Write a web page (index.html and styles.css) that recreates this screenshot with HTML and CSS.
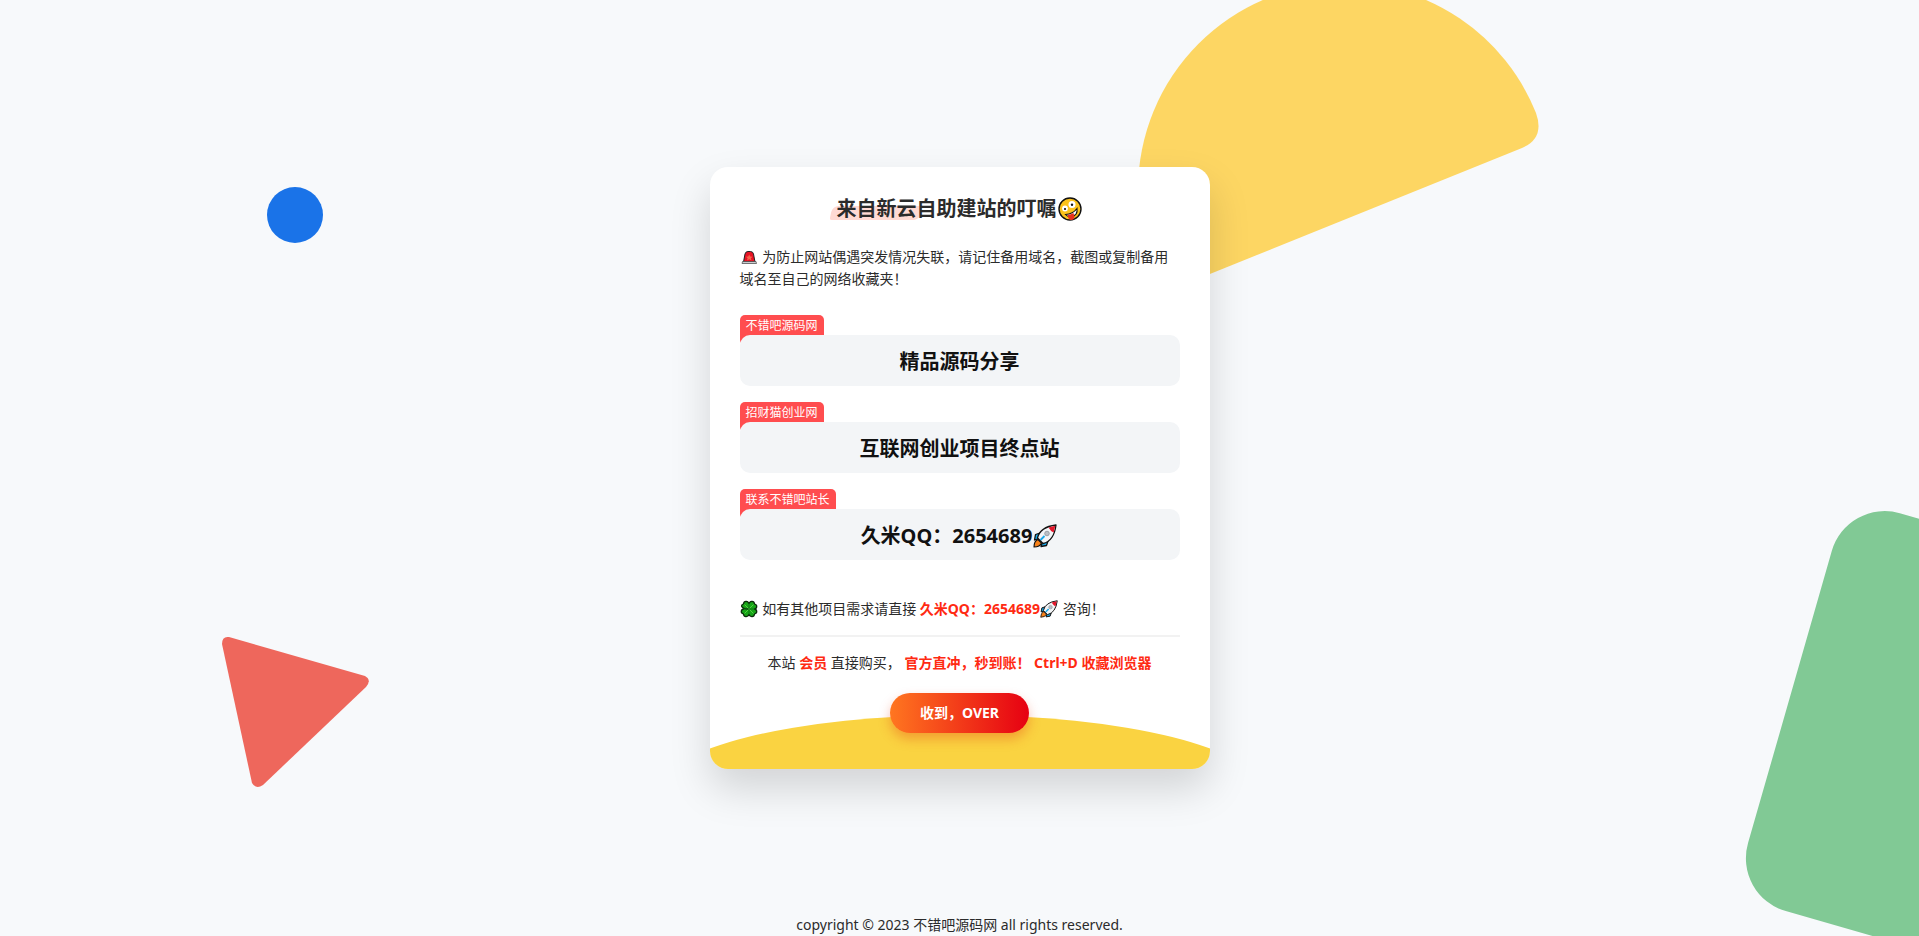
FILE: index.html
```html
<!DOCTYPE html>
<html lang="zh-CN">
<head>
<meta charset="utf-8">
<meta name="viewport" content="width=device-width, initial-scale=1">
<title>来自新云自助建站的叮嘱</title>
<link rel="stylesheet" href="styles.css">
</head>
<body class="page">
<svg class="backdrop" viewBox="0 0 1919 936" preserveAspectRatio="xMidYMid slice" aria-hidden="true">
  <circle cx="295" cy="215" r="28" fill="#1a73e8"/>
  <path d="M1138 190A207 207 0 0 1 1344 -17A207 207 0 0 1 1536 113Q1545 138 1522 148L1200 278Q1140 280 1138 190Z" fill="#fdd663"/>
  <path d="M229 637L365 676Q372 680 366 687L263 785Q256 790 252 783L222 644Q222 636 229 637Z" fill="#ee675c"/>
  <rect x="0" y="0" width="420" height="414" rx="55" transform="translate(1847 498) rotate(16)" fill="#81c995"/>
</svg>
<svg width="0" height="0" class="sprite" aria-hidden="true">
  <symbol id="rocket" viewBox="0 0 24 24">
    <path d="M7 9L2.500 10.500L1.500 16L6 14.500ZM15 17L13.500 21.500L8 22.500L9.500 18Z" fill="#18a8e8" stroke="#111" stroke-width="1.300" stroke-linejoin="round"/>
    <path d="M5 15.500Q1 17 1 23Q7 23 8.500 19Z" fill="#f7821b" stroke="#111" stroke-width="1.100" stroke-linejoin="round"/>
    <path d="M4.500 14Q7 3 23 1Q21 17 10 19.500Z" fill="#f2f4f6" stroke="#111" stroke-width="1.300" stroke-linejoin="round"/>
    <path d="M15.500 3.400L22.300 1.700L20.600 8.500Q17.500 7 15.500 3.400Z" fill="#e3172b"/>
    <circle cx="14" cy="9.500" r="2.300" fill="#b9bfc5" stroke="#8c9399" stroke-width=".8"/>
    <path d="M7.500 16L11.500 12" stroke="#18a8e8" stroke-width="1.800"/>
  </symbol>
</svg>
<main class="stage">
  <section class="card">
    <h1 class="title"><span class="mark">来自新云</span>自助建站的叮嘱<svg class="emoji-lg" viewBox="0 0 24 24" role="img" aria-label="鬼脸"><circle cx="12" cy="12" r="11" fill="#fcc21b" stroke="#111" stroke-width="1.400"/><circle cx="7" cy="11.500" r="2.900" fill="#fff"/><circle cx="14" cy="7.500" r="3.500" fill="#fff"/><circle cx="7" cy="12" r="1.100" fill="#111"/><circle cx="14" cy="7.700" r="1.200" fill="#111"/><path d="M7.500 17.500Q15 17 19 11.500Q20 18.500 13.500 19.500Q9.500 20 7.500 17.500Z" fill="#fff" stroke="#111" stroke-width="1.100"/><path d="M9.500 18Q13 17.500 15.500 16L16.500 20Q16 23.500 12.500 23Q10 22 9.500 18Z" fill="#e8301c"/></svg></h1>
    <p class="text intro"><svg class="emoji" viewBox="0 0 18 18" role="img" aria-label="警报"><path d="M3.500 14L5 6Q5.500 3.500 8 3.500H10.500Q13 3.500 13.500 6L15 14Z" fill="#e81224" stroke="#222" stroke-width="1"/><path d="M9.200 6.500L10.200 8.500L12.500 8.700L10.800 10.200L11.500 12.500L9.200 11.300L7 12.500L7.600 10.200L6 8.700L8.200 8.500Z" fill="#f3664d"/><path d="M2.500 13.500H16L16.500 15.500H2Z" fill="#c8ccd0" stroke="#444" stroke-width=".7"/></svg> 为防止网站偶遇突发情况失联，请记住备用域名，截图或复制备用域名至自己的网络收藏夹！</p>
    <div class="sites">
      <div class="site"><span class="tag">不错吧源码网</span><a class="name" href="#">精品源码分享</a></div>
      <div class="site"><span class="tag">招财猫创业网</span><a class="name" href="#">互联网创业项目终点站</a></div>
      <div class="site"><span class="tag">联系不错吧站长</span><a class="name" href="#">久米QQ：2654689<svg class="emoji-lg" role="img" aria-label="火箭"><use href="#rocket"/></svg></a></div>
    </div>
    <p class="text contact"><svg class="emoji" viewBox="0 0 18 18" role="img" aria-label="四叶草"><path d="M9 9C1 9 0 5 3.500 4C4 0 8.500 1 9 4C9.500 1 14 0 14.500 4C18 5 17 9 14 9C17 9 18 13 14.500 14C14 18 9.500 17 9 14C8.500 17 4 18 3.500 14C0 13 1 9 4 9" fill="#16a516" stroke="#0b2b0b" stroke-width="1.300"/><path d="M4.500 4.500L13.500 13.500M13.500 4.500L4.500 13.500" stroke="#64d84c" stroke-width=".8"/><path d="M9 3V15M3 9H15" stroke="#0b6b12" stroke-width=".8"/></svg> 如有其他项目需求请直接 <a class="hot" href="#">久米QQ：2654689<svg class="emoji" role="img" aria-label="火箭"><use href="#rocket"/></svg></a> 咨询！</p>
    <hr class="rule">
    <p class="text buy">本站 <a class="hot" href="#">会员</a> 直接购买， <strong class="hot">官方直冲，秒到账！</strong> <strong class="hot">Ctrl+D 收藏浏览器</strong></p>
    <button class="confirm" type="button">收到，OVER</button>
  </section>
</main>
<footer class="footer">copyright © 2023 不错吧源码网 all rights reserved.</footer>
</body>
</html>
```

FILE: styles.css
```css
* {
  box-sizing: border-box;
}

.page {
  position: relative;
  display: grid;
  grid-template-rows: 1fr;
  min-height: 100vh;
  margin: 0;
  overflow: hidden;
  background: #f7f9fb;
  color: #2b2b2b;
  font: 14px/22px "Noto Sans", "Noto Sans CJK SC", sans-serif;
}

/* Decorative shapes behind the card */
.backdrop {
  position: absolute;
  inset: 0;
  width: 100%;
  height: 100%;
}

.sprite {
  position: absolute;
}

.stage {
  position: relative;
  display: grid;
  place-items: center;
  grid-area: 1 / 1;
  padding: 40px 16px;
}

.card {
  position: relative;
  display: flex;
  flex-direction: column;
  width: 100%;
  max-width: 500px;
  padding: 26px 30px 36px;
  overflow: hidden;
  border-radius: 18px;
  background: #fff;
  box-shadow: 0 20px 40px rgba(0, 0, 0, 0.15);
}

/* Yellow hill along the card's bottom edge */
.card::after {
  content: "";
  position: absolute;
  bottom: -96px;
  left: -10%;
  width: 120%;
  height: 150px;
  border-radius: 50%;
  background: #fad341;
}

.title {
  position: relative;
  z-index: 0;
  margin: 0;
  text-align: center;
  font-size: 20px;
  line-height: 32px;
}

.mark {
  position: relative;
}

.mark::before {
  content: "";
  position: absolute;
  z-index: -1;
  right: -4px;
  bottom: 2px;
  left: -6px;
  height: 14px;
  border-radius: 6px 2px 6px 2px;
  background: #ffdad4;
  transform: skewX(-12deg);
}

.emoji,
.emoji-lg {
  width: 18px;
  height: 18px;
  margin-right: 1px;
  vertical-align: -4px;
}

.emoji-lg {
  width: 24px;
  height: 24px;
  margin: 0 1px;
  vertical-align: -5px;
}

.text {
  margin: 0;
}

.intro {
  margin-top: 21px;
}

.sites {
  display: grid;
  gap: 16px;
  margin-top: 25px;
}

.site {
  display: flex;
  flex-direction: column;
  align-items: flex-start;
}

.tag {
  height: 30px;
  margin-bottom: -10px;
  padding: 0 6px;
  border-radius: 5px;
  background: #ff4d4f;
  color: #fff;
  font-size: 12px;
}

.name {
  position: relative;
  width: 100%;
  padding: 11px 10px 9px;
  border-radius: 10px;
  background: #f3f5f7;
  color: #111;
  text-align: center;
  text-decoration: none;
  font-size: 20px;
  font-weight: 700;
  line-height: 31px;
}

.contact {
  margin-top: 38px;
}

.rule {
  width: 100%;
  height: 2px;
  margin: 15px 0;
  border: 0;
  background: #f2f2f2;
}

.buy {
  text-align: center;
}

.hot {
  color: #ff2a12;
  font-weight: 700;
  text-decoration: none;
}

.confirm {
  position: relative;
  z-index: 1;
  align-self: center;
  margin-top: 19px;
  padding: 9px 30px;
  border: 0;
  border-radius: 20px;
  background: linear-gradient(90deg, #ff7620, #e60012);
  box-shadow: 0 6px 12px rgba(230, 60, 20, 0.35);
  color: #fff;
  font: inherit;
  font-weight: 700;
  cursor: pointer;
}

.footer {
  position: relative;
  grid-area: 1 / 1;
  align-self: end;
  text-align: center;
}
```
